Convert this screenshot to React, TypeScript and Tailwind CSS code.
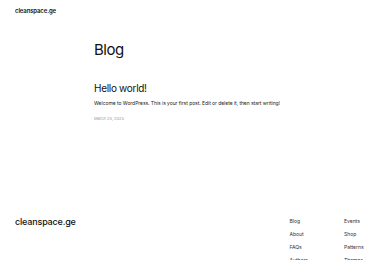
export default function App() {
  const colA = ['Blog', 'About', 'FAQs', 'Authors']
  const colB = ['Events', 'Shop', 'Patterns', 'Themes']

  return (
    <div className="h-[260px] w-[380px] overflow-hidden bg-white text-[#111] font-['Inter',sans-serif]">
      {/* header */}
      <header className="flex h-[21px] items-center px-[15px]">
        <span className="text-[6px] font-semibold tracking-[-0.02em]">cleanspace.ge</span>
      </header>

      <main className="mx-auto w-[192px]">
        <h1 className="mt-[18px] text-[15px] leading-[22px] font-normal tracking-[-0.03em]">Blog</h1>

        <article className="mt-[20px]">
          <h2 className="text-[10px] leading-[14px] font-normal tracking-[-0.03em]">Hello world!</h2>
          <p className="mt-[4px] whitespace-nowrap text-[5px] leading-[8px] text-[#222] tracking-[-0.01em]">
            Welcome to WordPress. This is your first post. Edit or delete it, then start writing!
          </p>
          <p className="mt-[9px] text-[4px] leading-[6px] text-[#999]">March 25, 2025</p>
        </article>
      </main>

      {/* footer */}
      <footer className="mt-[93px] flex justify-between pl-[15px] pr-[15px]">
        <span className="text-[9px] leading-[14px] font-medium tracking-[-0.02em]">cleanspace.ge</span>
        <div className="mt-[3px] flex gap-[36px]">
          <ul className="flex flex-col gap-[7px] text-[5px] leading-[6px] text-[#333]">
            {colA.map(l => (
              <li key={l}>{l}</li>
            ))}
          </ul>
          <ul className="flex w-[21px] flex-col gap-[7px] text-[5px] leading-[6px] text-[#333]">
            {colB.map(l => (
              <li key={l}>{l}</li>
            ))}
          </ul>
        </div>
      </footer>
    </div>
  )
}
